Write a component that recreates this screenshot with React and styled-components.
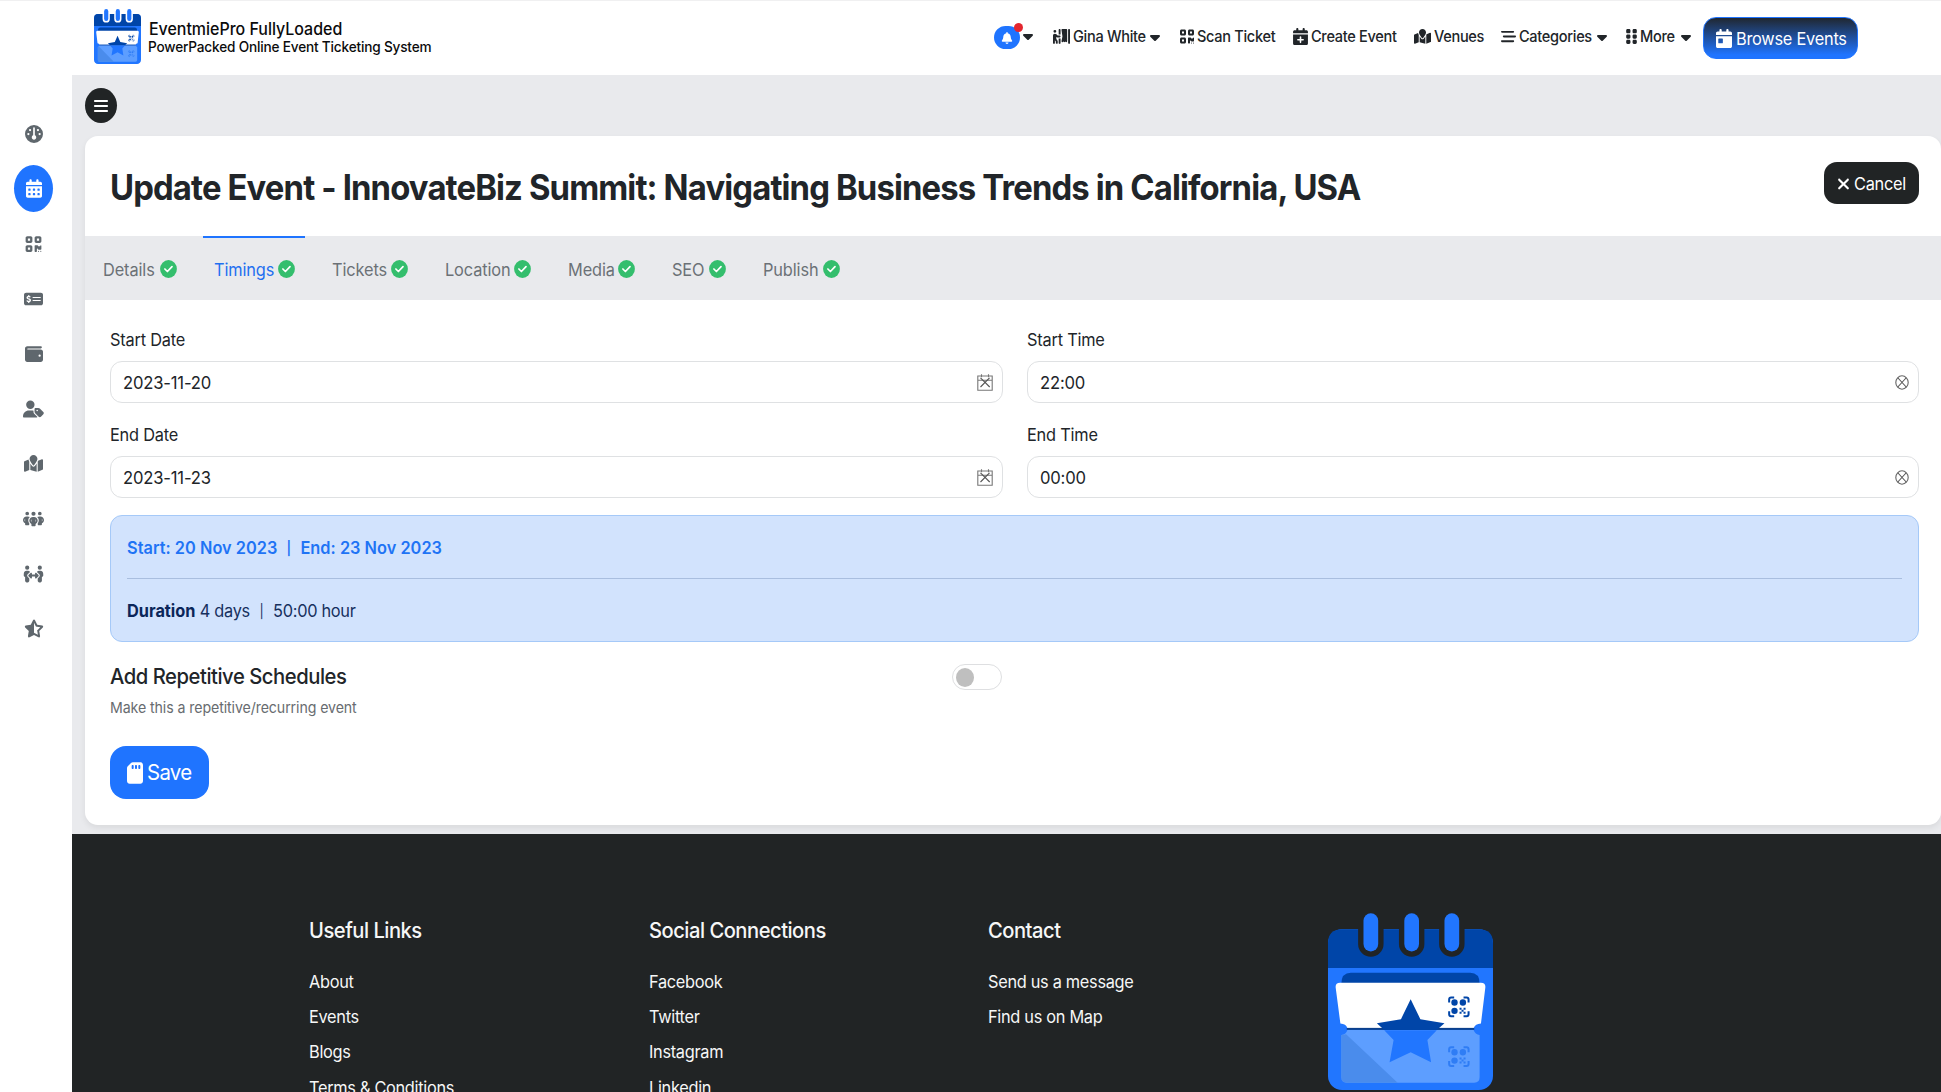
import React from "react";
import styled, { createGlobalStyle, css } from "styled-components";
import {
  FaGauge, FaCalendarDays, FaQrcode, FaMoneyCheckDollar, FaWallet, FaUserTag,
  FaMapLocation, FaPeopleGroup, FaPeopleArrows, FaStarHalfStroke, FaPersonBooth,
  FaCalendarPlus, FaBarsStaggered, FaGripVertical, FaCalendarDay, FaXmark,
  FaSdCard, FaBars, FaBell, FaCaretDown,
} from "react-icons/fa6";

const Global = createGlobalStyle`
  * { box-sizing: border-box; }
  html, body { margin: 0; padding: 0; height: 100%; overflow: hidden; }
  body {
    font-family: Inter, "Liberation Sans", sans-serif;
    font-size: 17.3px;
    line-height: 1;
    color: #212529;
    background: #fff;
    white-space: nowrap;
  }
  svg { display: block; flex: none; }
  h1, h2, h3, p, ul { margin: 0; padding: 0; font-weight: inherit; font-size: inherit; }
  button { font: inherit; border: 0; padding: 0; }
`;

/* Slightly condensed setting of the UI typeface. */
const condensed = css`
  transform: scaleX(${(p) => p.$sx || 0.945});
  transform-origin: left center;
`;

const Text = styled.span`
  flex: 1;
  min-width: 0;
  text-align: left;
  ${condensed}
`;

const Glyph = styled.span`
  display: flex;
  flex: none;
  svg { width: ${(p) => p.$w}px; height: ${(p) => p.$h}px; }
`;

const Page = styled.div`
  display: flex;
  flex-direction: column;
  height: 1092px;
  overflow: hidden;
`;

const Header = styled.header`
  display: flex;
  height: 75px;
  flex: none;
  border-top: 1px solid #f0f0f1;
  padding: 0 83px 0 94px;
  justify-content: space-between;
`;

const Brand = styled.div`
  display: flex;
  gap: 7px;
  padding-top: 8px;
`;

const BrandText = styled.div`
  padding-top: 10px;
  color: #0b0b0c;
  font-weight: 500;
`;

const BrandName = styled.div`
  font-size: 16.9px;
  line-height: 20px;
  padding-left: 1px;
  ${condensed}
`;

const BrandTag = styled.div`
  font-size: 14.4px;
  line-height: 16px;
  letter-spacing: -0.18px;
  ${condensed}
`;

const Nav = styled.nav`
  display: flex;
  align-items: flex-start;
`;

const NavItem = styled.a`
  display: flex;
  align-items: center;
  height: 21px;
  margin-top: 25px;
  margin-right: ${(p) => p.$after || 16}px;
  width: ${(p) => p.$w}px;
  font-size: 15.4px;
  font-weight: 500;
  letter-spacing: -0.32px;
  gap: 3px;
`;

const Caret = styled(FaCaretDown)`
  width: 10px;
  height: 16px;
`;

const BellWrap = styled.a`
  display: flex;
  align-items: flex-start;
  gap: 3px;
  width: 40px;
  margin: 25px 19px 0 0;
  ${Caret} { margin-top: 2px; }
`;

const Bell = styled.span`
  position: relative;
  display: flex;
  align-items: center;
  justify-content: center;
  width: 26px;
  height: 23px;
  border-radius: 12px;
  background: #1f74ff;
  color: #fff;
`;

const Dot = styled.i`
  position: absolute;
  top: -3px;
  right: -3px;
  width: 9px;
  height: 9px;
  border-radius: 50%;
  background: #e3262e;
`;

const BrowseButton = styled.button`
  display: flex;
  align-items: center;
  gap: 4px;
  width: 155px;
  height: 42px;
  margin-top: 16px;
  padding: 1px 12px 0;
  border-radius: 13px;
  border: 1px solid #1f74ff;
  background: linear-gradient(180deg, #20252b 0%, #1f74ff 90%);
  background-origin: border-box;
  color: #fff;
  letter-spacing: -0.25px;
`;

const Body = styled.div`
  display: flex;
  flex: 1;
  min-height: 0;
`;

const Sidebar = styled.aside`
  display: flex;
  flex-direction: column;
  width: 72px;
  flex: none;
  padding: 35px 0 0 14px;
  gap: 8px;
`;

const SideLink = styled.a`
  display: flex;
  align-items: center;
  justify-content: center;
  width: 39px;
  height: 47px;
  flex: none;
  border-radius: 50%;
  color: ${(p) => (p.$active ? "#fff" : "#5f676d")};
  background: ${(p) => (p.$active ? "#1f74ff" : "transparent")};
`;

const Main = styled.main`
  flex: 1;
  min-width: 0;
  background: #e9eaed;
`;

const Toolbar = styled.div`
  height: 61px;
  padding: 13px 0 0 13px;
`;

const MenuButton = styled.button`
  display: flex;
  align-items: center;
  justify-content: center;
  width: 32px;
  height: 35px;
  border-radius: 50%;
  background: #212425;
  color: #fff;
`;

const Card = styled.section`
  height: 689px;
  margin-left: 13px;
  border-radius: 13px;
  background: #fff;
  box-shadow: 0 3px 6px rgba(0, 0, 0, 0.07);
`;

const CardHead = styled.div`
  display: flex;
  height: 100px;
  padding: 26px 22px 0 25px;
`;

const Title = styled.h1`
  flex: 1;
  min-width: 0;
  font-size: 35px;
  line-height: 50px;
  font-weight: 700;
  letter-spacing: -0.92px;
  ${condensed}
`;

const CancelButton = styled.button`
  display: flex;
  align-items: center;
  gap: 4px;
  width: 95px;
  height: 42px;
  padding: 1px 12px 0 13px;
  border-radius: 13px;
  background: #212425;
  color: #fff;
  letter-spacing: -0.3px;
`;

const Tabs = styled.div`
  display: flex;
  gap: 16px;
  height: 64px;
  padding-left: 7px;
  background: #e9eaed;
`;

const Tab = styled.a`
  display: flex;
  align-items: center;
  width: ${(p) => p.$w}px;
  padding: 0 10px 0 11px;
  border-top: 2px solid ${(p) => (p.$active ? "#1f74ff" : "transparent")};
  color: ${(p) => (p.$active ? "#1f6ff0" : "#6b7176")};
  letter-spacing: -0.12px;
  ${Text} { padding-top: 1px; }
`;

const Form = styled.div`
  padding: 26px 22px 0 25px;
`;

const Fields = styled.div`
  display: grid;
  grid-template-columns: 1fr 1fr;
  column-gap: 24px;
  row-gap: 18px;
`;

const Label = styled.div`
  height: 35px;
  line-height: 28px;
  letter-spacing: -0.22px;
  ${condensed}
`;

const Input = styled.div`
  display: flex;
  align-items: center;
  height: 42px;
  border: 1px solid #dfe1e3;
  border-radius: 12px;
  padding: 1px ${(p) => p.$pr}px 0 12px;
  font-size: 17.6px;
  letter-spacing: -0.2px;
`;

const Alert = styled.div`
  height: 127px;
  margin-top: 17px;
  padding: 17px 16px;
  border: 1px solid #a5c9f8;
  border-radius: 12px;
  background: #d2e3fd;
`;

const AlertLine = styled.p`
  line-height: ${(p) => p.$lh}px;
  font-weight: ${(p) => (p.$strong ? 600 : 400)};
  color: ${(p) => (p.$strong ? "#1f74f5" : "#17305e")};
  white-space: pre;
  letter-spacing: ${(p) => p.$ls}px;
  ${condensed}
  b { font-weight: 700; color: #0b2659; letter-spacing: 0; }
`;

const Bar = styled.span`
  font-size: 0.78em;
  padding: 0 1px;
  vertical-align: 1px;
`;

const Rule = styled.div`
  height: 1px;
  margin: 15px 0 16px;
  background: #a9bedf;
`;

const RepeatRow = styled.div`
  display: flex;
  justify-content: space-between;
  width: 892px;
  margin-top: 21px;
`;

const RepeatTitle = styled.h2`
  font-size: 21.4px;
  line-height: 27px;
  font-weight: 500;
  letter-spacing: -0.48px;
  ${condensed}
`;

const Hint = styled.p`
  font-size: 15px;
  line-height: 20px;
  margin-top: 8px;
  color: #686c70;
  letter-spacing: -0.1px;
  ${condensed}
`;

const Toggle = styled.span`
  display: flex;
  align-items: center;
  width: 50px;
  height: 26px;
  margin-top: 1px;
  padding-left: 3px;
  border: 1px solid #dedfe1;
  border-radius: 13px;
`;

const Knob = styled.i`
  width: 18px;
  height: 19px;
  border-radius: 50%;
  background: #bfbfbf;
`;

const SaveButton = styled.button`
  display: flex;
  align-items: center;
  gap: 4px;
  width: 99px;
  height: 53px;
  margin-top: 28px;
  padding: 1px 16px 0 17px;
  border-radius: 16px;
  background: #1f74ff;
  color: #fff;
  font-size: 21.6px;
  letter-spacing: -0.75px;
`;

const Footer = styled.footer`
  display: flex;
  height: 260px;
  margin-top: 9px;
  padding: 79px 0 0 237px;
  background: #212425;
  color: #f6f7f7;
  overflow: hidden;
`;

const FootCol = styled.div`
  width: 339.5px;
  flex: none;
  padding-top: 3px;
`;

const FootHead = styled.h3`
  font-size: 21.3px;
  line-height: 28px;
  font-weight: 500;
  letter-spacing: -0.5px;
  margin-bottom: 20px;
  ${condensed}
`;

const FootLink = styled.a`
  display: block;
  line-height: 35.2px;
  letter-spacing: -0.32px;
  ${condensed}
`;

function QrMark({ x, y, color }) {
  return (
    <g transform={`translate(${x} ${y})`}>
      <g fill="none" stroke={color} strokeWidth="6">
        <path d="M3 18V9Q3 3 9 3H18M46 3H55Q61 3 61 9V18M61 44V53Q61 59 55 59H46M18 59H9Q3 59 3 53V44" />
      </g>
      <g fill={color}>
        <circle cx="19" cy="18" r="9.5" />
        <circle cx="44" cy="18" r="9.5" />
        <circle cx="19" cy="43" r="9.5" />
        <path d="M34 34h6v6h6v-6h6v6h-6v6h6v6h-6v-6h-6v6h-6v-6h6v-6h-6z" />
      </g>
    </g>
  );
}

function Logo({ width, height, gap }) {
  return (
    <svg width={width} height={height} viewBox="84 68 493 530" preserveAspectRatio="none">
      <rect x="84" y="117" width="493" height="481" rx="42" fill="#2176ff" />
      <path d="M84 233V159Q84 117 126 117H535Q577 117 577 159V233Z" fill="#0045a8" />
      {[212, 334, 454].map((c) => (
        <g key={c}>
          <path d={`M${c - 38} 110V161a38 38 0 0 0 76 0V110Z`} fill={gap} />
          <rect x={c - 22} y="69" width="44" height="114" rx="22" fill="#2176ff" />
        </g>
      ))}
      <path d="M124 280Q124 247 152 247H509Q537 247 537 280Z" fill="#0045a8" />
      <path d="M107 292Q105 277 120 277H541Q556 277 554 292L541 399Q524 400 519 413H142Q138 400 121 399Z" fill="#fff" />
      <path d="M142 418H519Q524 431 537 433V560Q537 576 521 576H140Q124 576 124 560V433Q138 431 142 418Z" fill="#5d9eff" />
      <path d="M138 431L292 576H140Q124 576 124 560V433Z" fill="#4a8cec" />
      <rect x="140" y="412" width="381" height="6" fill="#0b3f8c" />
      <path d="M331 326L360 386L432 398L409 418H252L230 398L302 386Z" fill="#0045a8" />
      <path d="M252 419H409L381 448L392 515L331 485L268 515L280 448Z" fill="#2176ff" />
      <QrMark x={443} y={318} color="#0045a8" />
      <QrMark x={443} y={467} color="#2f7df5" />
    </svg>
  );
}

const Check = () => (
  <svg width="17" height="18" viewBox="0 0 17 18">
    <ellipse cx="8.5" cy="9" rx="8.4" ry="8.9" fill="#34be6d" />
    <path d="M4.9 9L7.4 11.5L12 6.7" fill="none" stroke="#fff" strokeWidth="1.7" strokeLinecap="round" strokeLinejoin="round" />
  </svg>
);

const DateClear = () => (
  <svg width="16" height="17" viewBox="0 0 16 17" fill="none" stroke="#777" strokeWidth="1.1">
    <path d="M.8 2H15.2V16.2H.8ZM.8 6.3H15.2M4.5 .3V3.2M11.5 .3V3.2" />
    <path d="M3.5 3.8L12.7 13M12.5 3.8L3.5 13" stroke="#555" />
  </svg>
);

const TimeClear = () => (
  <svg width="14" height="15" viewBox="0 0 14 15" fill="none" stroke="#666" strokeWidth="1.1">
    <ellipse cx="7" cy="7.5" rx="6.2" ry="6.7" />
    <path d="M3 3L11.2 12M11 3L2.8 12" stroke="#555" />
  </svg>
);

const sideIcons = [
  [FaGauge, 18, 18], [FaCalendarDays, 16, 19], [FaQrcode, 17, 18], [FaMoneyCheckDollar, 19, 18],
  [FaWallet, 18, 18], [FaUserTag, 21, 18], [FaMapLocation, 19, 19], [FaPeopleGroup, 21, 18],
  [FaPeopleArrows, 21, 18], [FaStarHalfStroke, 20, 19],
];

const navItems = [
  ["Gina White", FaPersonBooth, 17, 107, 20, true],
  ["Scan Ticket", FaQrcode, 14, 97, 16, false],
  ["Create Event", FaCalendarPlus, 15, 105, 16, false],
  ["Venues", FaMapLocation, 17, 71, 16, false],
  ["Categories", FaBarsStaggered, 15, 106, 19, true],
  ["More", FaGripVertical, 11, 65, 12, true],
];

const tabs = [
  ["Details", 95], ["Timings", 102], ["Tickets", 97], ["Location", 107],
  ["Media", 88], ["SEO", 75], ["Publish", 98],
];

const fields = [
  ["Start Date", "2023-11-20", true], ["Start Time", "22:00", false],
  ["End Date", "2023-11-23", true], ["End Time", "00:00", false],
];

const columns = [
  ["Useful Links", ["About", "Events", "Blogs", "Terms & Conditions"]],
  ["Social Connections", ["Facebook", "Twitter", "Instagram", "Linkedin"]],
  ["Contact", ["Send us a message", "Find us on Map"]],
];

export default function App() {
  return (
    <Page>
      <Global />
      <Header>
        <Brand>
          <Logo width={47} height={55} gap="#fff" />
          <BrandText>
            <BrandName>EventmiePro FullyLoaded</BrandName>
            <BrandTag>PowerPacked Online Event Ticketing System</BrandTag>
          </BrandText>
        </Brand>
        <Nav>
          <BellWrap>
            <Bell>
              <FaBell size={12} />
              <Dot />
            </Bell>
            <Caret />
          </BellWrap>
          {navItems.map(([name, Icon, iw, w, after, caret]) => (
            <NavItem key={name} $w={w} $after={after}>
              <Glyph $w={iw} $h={17}><Icon /></Glyph>
              <Text>{name}</Text>
              {caret && <Caret />}
            </NavItem>
          ))}
          <BrowseButton>
            <Glyph $w={16} $h={19}><FaCalendarDay preserveAspectRatio="none" /></Glyph>
            <Text>Browse Events</Text>
          </BrowseButton>
        </Nav>
      </Header>
      <Body>
        <Sidebar>
          {sideIcons.map(([Icon, w, h], i) => (
            <SideLink key={i} $active={i === 1}>
              <Glyph $w={w} $h={h}><Icon /></Glyph>
            </SideLink>
          ))}
        </Sidebar>
        <Main>
          <Toolbar>
            <MenuButton><FaBars size={16} /></MenuButton>
          </Toolbar>
          <Card>
            <CardHead>
              <Title $sx={0.9385}>Update Event - InnovateBiz Summit: Navigating Business Trends in California, USA</Title>
              <CancelButton><Glyph $w={13} $h={18}><FaXmark /></Glyph><Text>Cancel</Text></CancelButton>
            </CardHead>
            <Tabs>
              {tabs.map(([name, w]) => (
                <Tab key={name} $w={w} $active={name === "Timings"}><Text>{name}</Text><Check /></Tab>
              ))}
            </Tabs>
            <Form>
              <Fields>
                {fields.map(([label, value, isDate]) => (
                  <div key={label}>
                    <Label>{label}</Label>
                    <Input $pr={9}><Text>{value}</Text>{isDate ? <DateClear /> : <TimeClear />}</Input>
                  </div>
                ))}
              </Fields>
              <Alert>
                <AlertLine $strong $lh={30} $ls={0.02}>Start: 20 Nov 2023{"  "}<Bar>|</Bar>{"  "}End: 23 Nov 2023</AlertLine>
                <Rule />
                <AlertLine $lh={32} $ls={-0.3}><b>Duration</b>{" 4 days  "}<Bar>|</Bar>{"  50:00 hour"}</AlertLine>
              </Alert>
              <RepeatRow>
                <div>
                  <RepeatTitle>Add Repetitive Schedules</RepeatTitle>
                  <Hint>Make this a repetitive/recurring event</Hint>
                </div>
                <Toggle><Knob /></Toggle>
              </RepeatRow>
              <SaveButton><Glyph $w={16} $h={22}><FaSdCard /></Glyph><Text>Save</Text></SaveButton>
            </Form>
          </Card>
          <Footer>
            {columns.map(([head, links]) => (
              <FootCol key={head}>
                <FootHead>{head}</FootHead>
                {links.map((l) => <FootLink key={l}>{l}</FootLink>)}
              </FootCol>
            ))}
            <Logo width={165} height={177} gap="#212425" />
          </Footer>
        </Main>
      </Body>
    </Page>
  );
}
